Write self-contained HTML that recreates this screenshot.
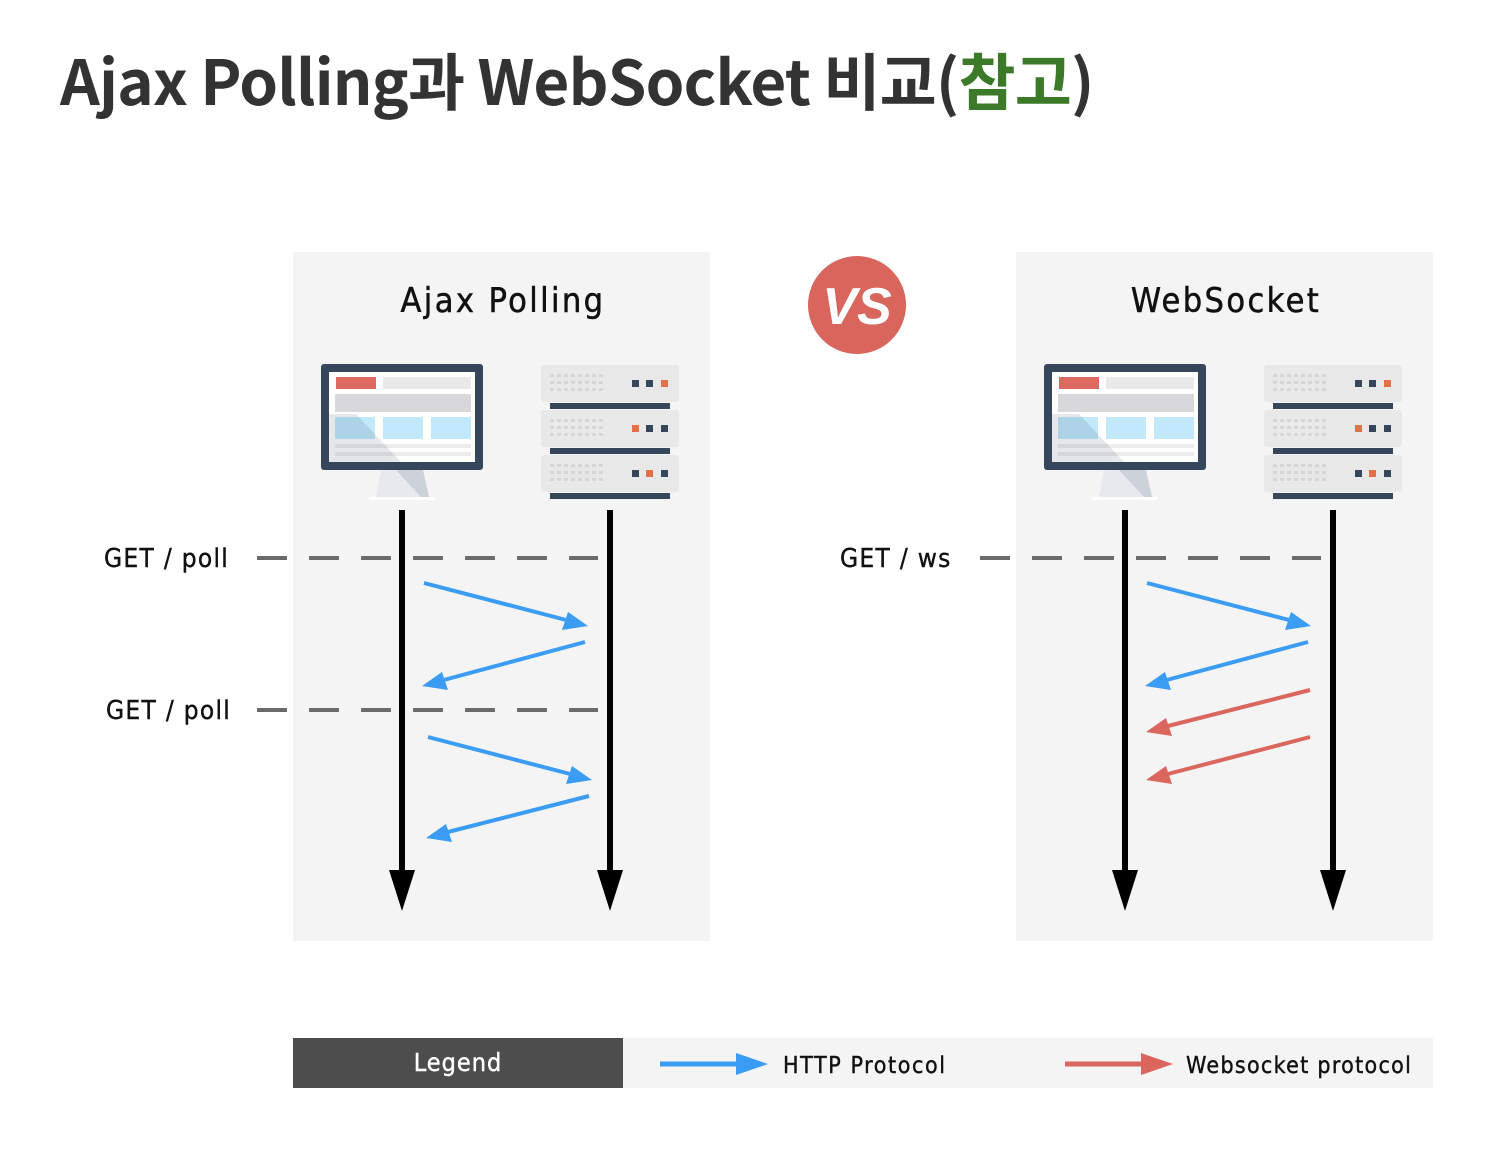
<!DOCTYPE html>
<html><head><meta charset="utf-8"><style>
html,body{margin:0;padding:0;background:#fff;width:1486px;height:1164px;overflow:hidden}
h1{position:absolute;left:60px;top:28px;margin:0;font-family:"Noto Sans CJK KR","Liberation Sans",sans-serif;font-weight:700;font-size:62px;letter-spacing:-0.8px;color:#333;white-space:nowrap;line-height:100px}
h1 span{color:#3c7a2a}
svg{position:absolute;left:0;top:0}
.t{font-family:"DejaVu Sans Condensed","Liberation Sans",sans-serif;fill:#111}
</style></head><body>
<h1>Ajax Polling과 WebSocket 비교(<span>참고</span>)</h1>
<svg width="1486" height="1164" viewBox="0 0 1486 1164">
<defs>
<g id="mon">
<rect x="0" y="0" width="162" height="106" rx="3" fill="#36475b"/>
<rect x="8" y="8" width="146" height="90" fill="#fff"/>
<rect x="15" y="13" width="40" height="12" fill="#dc6a61"/>
<rect x="62" y="13" width="88" height="12" fill="#e9e9e9"/>
<rect x="14" y="30" width="136" height="18" fill="#d8d8da"/>
<rect x="14" y="53" width="40" height="22" fill="#c2e8fb"/>
<rect x="62" y="53" width="40" height="22" fill="#c2e8fb"/>
<rect x="110" y="53" width="40" height="22" fill="#c2e8fb"/>
<rect x="14" y="80" width="136" height="4" fill="#ececec"/>
<rect x="14" y="88" width="136" height="4" fill="#ececec"/>
<polygon points="8,50 35,50 80,98 8,98" fill="#36475b" opacity="0.13"/>
<polygon points="60,106 102,106 108,133 55,133" fill="#e7e9ee"/>
<polygon points="75,106 102,106 108,133 100,133" fill="#ccd1da"/>
<rect x="48" y="133" width="66" height="3" fill="#fff"/>
</g>
<g id="srvu">
<rect x="0" y="0" width="138" height="37" rx="3" fill="#e8e8e8"/>
<rect x="9" y="38" width="120" height="6" fill="#36475b"/>
<g fill="#d6d6d6">
<rect x="9" y="9" width="4" height="3"/><rect x="16" y="9" width="4" height="3"/><rect x="23" y="9" width="4" height="3"/><rect x="30" y="9" width="4" height="3"/><rect x="37" y="9" width="4" height="3"/><rect x="44" y="9" width="4" height="3"/><rect x="51" y="9" width="4" height="3"/><rect x="58" y="9" width="4" height="3"/>
<rect x="9" y="16" width="4" height="3"/><rect x="16" y="16" width="4" height="3"/><rect x="23" y="16" width="4" height="3"/><rect x="30" y="16" width="4" height="3"/><rect x="37" y="16" width="4" height="3"/><rect x="44" y="16" width="4" height="3"/><rect x="51" y="16" width="4" height="3"/><rect x="58" y="16" width="4" height="3"/>
<rect x="9" y="23" width="4" height="3"/><rect x="16" y="23" width="4" height="3"/><rect x="23" y="23" width="4" height="3"/><rect x="30" y="23" width="4" height="3"/><rect x="37" y="23" width="4" height="3"/><rect x="44" y="23" width="4" height="3"/><rect x="51" y="23" width="4" height="3"/><rect x="58" y="23" width="4" height="3"/>
</g>
</g>
<g id="srv">
<use href="#srvu"/>
<rect x="91" y="15" width="7" height="7" fill="#36475b"/><rect x="105" y="15" width="7" height="7" fill="#36475b"/><rect x="120" y="15" width="7" height="7" fill="#e4704a"/>
<g transform="translate(0,45)"><use href="#srvu"/>
<rect x="91" y="15" width="7" height="7" fill="#e4704a"/><rect x="105" y="15" width="7" height="7" fill="#36475b"/><rect x="120" y="15" width="7" height="7" fill="#36475b"/></g>
<g transform="translate(0,90)"><use href="#srvu"/>
<rect x="91" y="15" width="7" height="7" fill="#36475b"/><rect x="105" y="15" width="7" height="7" fill="#e4704a"/><rect x="120" y="15" width="7" height="7" fill="#36475b"/></g>
</g>
</defs>
<rect x="293" y="252" width="417" height="689" fill="#f4f4f4"/>
<rect x="1016" y="252" width="417" height="689" fill="#f4f4f4"/>
<circle cx="857" cy="305" r="49" fill="#d9665c"/>
<text x="857" y="324" text-anchor="middle" font-family="Liberation Sans,sans-serif" font-weight="700" font-style="italic" font-size="52" fill="#fff">VS</text>
<text class="t" x="503" y="312" text-anchor="middle" font-size="34" letter-spacing="2.4" stroke="#111" stroke-width="0.5">Ajax Polling</text>
<text class="t" x="1226" y="312" text-anchor="middle" font-size="34" letter-spacing="2.4" stroke="#111" stroke-width="0.5">WebSocket</text>
<use href="#mon" x="321" y="364"/>
<use href="#srv" x="541" y="365"/>
<use href="#mon" x="1044" y="364"/>
<use href="#srv" x="1264" y="365"/>
<g stroke="#6b6b6b" stroke-width="4" stroke-dasharray="30 22">
<line x1="257" y1="558" x2="598" y2="558"/>
<line x1="257" y1="710" x2="598" y2="710"/>
<line x1="980" y1="558" x2="1321" y2="558"/>
</g>
<text class="t" x="104" y="567" font-size="26" letter-spacing="1.3" stroke="#111" stroke-width="0.4">GET / poll</text>
<text class="t" x="106" y="719" font-size="26" letter-spacing="1.3" stroke="#111" stroke-width="0.4">GET / poll</text>
<text class="t" x="840" y="567" font-size="26" letter-spacing="1.3" stroke="#111" stroke-width="0.4">GET / ws</text>
<g stroke="#000" stroke-width="6">
<line x1="402" y1="510" x2="402" y2="880"/><line x1="610" y1="510" x2="610" y2="880"/>
<line x1="1125" y1="510" x2="1125" y2="880"/><line x1="1333" y1="510" x2="1333" y2="880"/>
</g>
<g fill="#000">
<polygon points="389,870 415,870 402,911"/><polygon points="597,870 623,870 610,911"/>
<polygon points="1112,870 1138,870 1125,911"/><polygon points="1320,870 1346,870 1333,911"/>
</g>
<g stroke-width="4" fill="none">
<g stroke="#3b9cf3">
<line x1="424" y1="583" x2="570" y2="621"/><line x1="585" y1="642" x2="440" y2="681"/>
<line x1="428" y1="737" x2="574" y2="775"/><line x1="589" y1="796" x2="444" y2="833"/>
<line x1="1147" y1="583" x2="1293" y2="621"/><line x1="1308" y1="642" x2="1163" y2="681"/>
</g>
<g stroke="#da665d">
<line x1="1310" y1="690" x2="1164" y2="727"/><line x1="1310" y1="737" x2="1164" y2="775"/>
</g>
</g>
<g fill="#3b9cf3">
<polygon points="588,626 562,630 568,612"/>
<polygon points="422,686 442,672 448,690"/>
<polygon points="592,780 566,784 572,766"/>
<polygon points="426,838 446,824 452,842"/>
<polygon points="1311,626 1285,630 1291,612"/>
<polygon points="1145,686 1165,672 1171,690"/>
</g>
<g fill="#da665d">
<polygon points="1146,732 1166,718 1172,736"/>
<polygon points="1146,780 1166,766 1172,784"/>
</g>
<rect x="293" y="1038" width="1140" height="50" fill="#f4f4f4"/>
<rect x="293" y="1038" width="330" height="50" fill="#4d4d4d"/>
<text x="458" y="1071" text-anchor="middle" font-family="DejaVu Sans Condensed,Liberation Sans,sans-serif" font-size="25" letter-spacing="1" fill="#fff" stroke="#fff" stroke-width="0.4">Legend</text>
<line x1="660" y1="1064" x2="740" y2="1064" stroke="#3b9cf3" stroke-width="5"/>
<polygon points="736,1053 768,1064 736,1075" fill="#3b9cf3"/>
<text class="t" x="783" y="1073" font-size="23" letter-spacing="1.6" stroke="#111" stroke-width="0.4">HTTP Protocol</text>
<line x1="1065" y1="1064" x2="1145" y2="1064" stroke="#da665d" stroke-width="5"/>
<polygon points="1141,1053 1173,1064 1141,1075" fill="#da665d"/>
<text class="t" x="1186" y="1073" font-size="23" letter-spacing="1.3" stroke="#111" stroke-width="0.4">Websocket protocol</text>
</svg>
</body></html>
